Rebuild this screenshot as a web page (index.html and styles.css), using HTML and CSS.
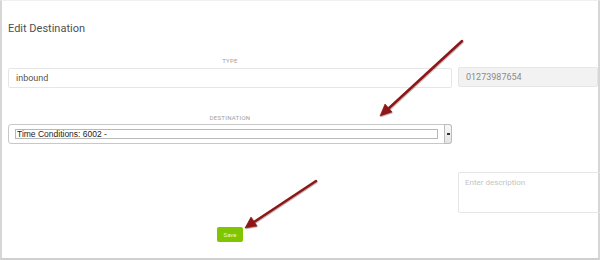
FILE: index.html
```html
<!DOCTYPE html>
<html>
<head>
<meta charset="utf-8">
<link rel="stylesheet" href="styles.css">
</head>
<body>
<div class="frame">
  <h1 class="title">Edit Destination</h1>
  <div class="grid">
    <div class="field">
      <div class="label">TYPE</div>
      <div class="input">inbound</div>
    </div>
    <div class="field end">
      <div class="input disabled">01273987654</div>
    </div>
    <div class="field dest">
      <div class="label">DESTINATION</div>
      <div class="select-wrap">
        <div class="select-inner">Time Conditions: 6002 -</div>
        <div class="select-btn"><span class="caret"></span></div>
      </div>
    </div>
    <div></div>
    <div></div>
    <div class="textarea">Enter description</div>
    <div class="actions"><button class="save">Save</button></div>
  </div>
  <svg class="arrows" width="600" height="260" viewBox="0 0 600 260">
    <defs>
      <filter id="sh" x="-20%" y="-20%" width="140%" height="140%">
        <feDropShadow dx="0.6" dy="0.8" stdDeviation="0.6" flood-color="#000" flood-opacity="0.35"/>
      </filter>
    </defs>
    <g filter="url(#sh)" fill="#8e1416" stroke="#8e1416">
      <line x1="462" y1="41" x2="388" y2="109" stroke-width="2.4" stroke-linecap="round"/>
      <polygon points="380,116 385,104 392,112" stroke-width="0.6"/>
      <line x1="316" y1="181" x2="254" y2="222" stroke-width="2.4" stroke-linecap="round"/>
      <polygon points="245,228 251,217 257,226" stroke-width="0.6"/>
    </g>
  </svg>
</div>
</body>
</html>
```
FILE: styles.css
```css
html, body {
  margin: 0;
  padding: 0;
  background: #fff;
}
.frame {
  position: relative;
  width: 600px;
  height: 260px;
  box-sizing: border-box;
  border-top: 1px solid #f0f0f0;
  border-left: 2px solid #d6d6d6;
  border-right: 2px solid #d6d6d6;
  border-bottom: 2px solid #cfcfcf;
  font-family: Roboto, "Liberation Sans", sans-serif;
  padding-left: 6px;
  padding-top: 21px;
}
.title {
  margin: 0;
  font-size: 11px;
  font-weight: 400;
  color: #505050;
  line-height: 14px;
}
.grid {
  display: grid;
  grid-template-columns: 444px 140px;
  column-gap: 6px;
  margin-top: 21px;
}
.field {
  display: flex;
  flex-direction: column;
}
.field.end {
  justify-content: flex-end;
}
.label {
  text-align: center;
  font-size: 6px;
  letter-spacing: 0.3px;
  color: #a0a0a0;
  line-height: 8px;
  margin-bottom: 3px;
}
.input {
  height: 20px;
  box-sizing: border-box;
  border: 1px solid #e6e6e6;
  border-radius: 2px;
  padding-left: 7px;
  font-size: 9px;
  line-height: 18px;
  color: #555;
}
.input.disabled {
  background: #f2f2f2;
  color: #8a8a8a;
  margin-bottom: 1px;
}
.dest {
  margin-top: 26px;
}
.dest .label {
  margin-bottom: 2px;
}
.select-wrap {
  height: 20px;
  box-sizing: border-box;
  border: 1px solid #c8c8c8;
  border-radius: 3px;
  display: flex;
  align-items: center;
  padding-left: 6px;
}
.select-inner {
  width: 423px;
  height: 10px;
  box-sizing: border-box;
  border: 1px solid #b8b8b8;
  font-family: "Liberation Sans", sans-serif;
  font-size: 8.5px;
  line-height: 8px;
  padding-left: 1px;
  color: #222;
}
.select-btn {
  margin-left: auto;
  width: 8px;
  height: 20px;
  box-sizing: border-box;
  border: 1px solid #bdbdbd;
  border-radius: 0 3px 3px 0;
  background: linear-gradient(#f8f8f8, #e4e4e4);
  display: flex;
  align-items: center;
  justify-content: center;
  margin-right: -1px;
}
.caret {
  width: 3px;
  height: 2px;
  background: #333;
}
.textarea {
  margin-top: 28px;
  height: 41px;
  box-sizing: border-box;
  border: 1px solid #e6e6e6;
  border-right: none;
  border-radius: 2px 0 0 2px;
  padding: 5px 6px;
  font-size: 8px;
  color: #c4c4c4;
  margin-right: -2px;
}
.actions {
  display: flex;
  justify-content: center;
  margin-top: 14px;
}
.save {
  width: 26px;
  height: 15px;
  border: none;
  border-radius: 2px;
  background: #7fc500;
  color: #eaf7d0;
  font-family: Roboto, "Liberation Sans", sans-serif;
  font-size: 6px;
  padding: 0;
}
.arrows {
  position: absolute;
  left: -2px;
  top: -1px;
  pointer-events: none;
}
```
